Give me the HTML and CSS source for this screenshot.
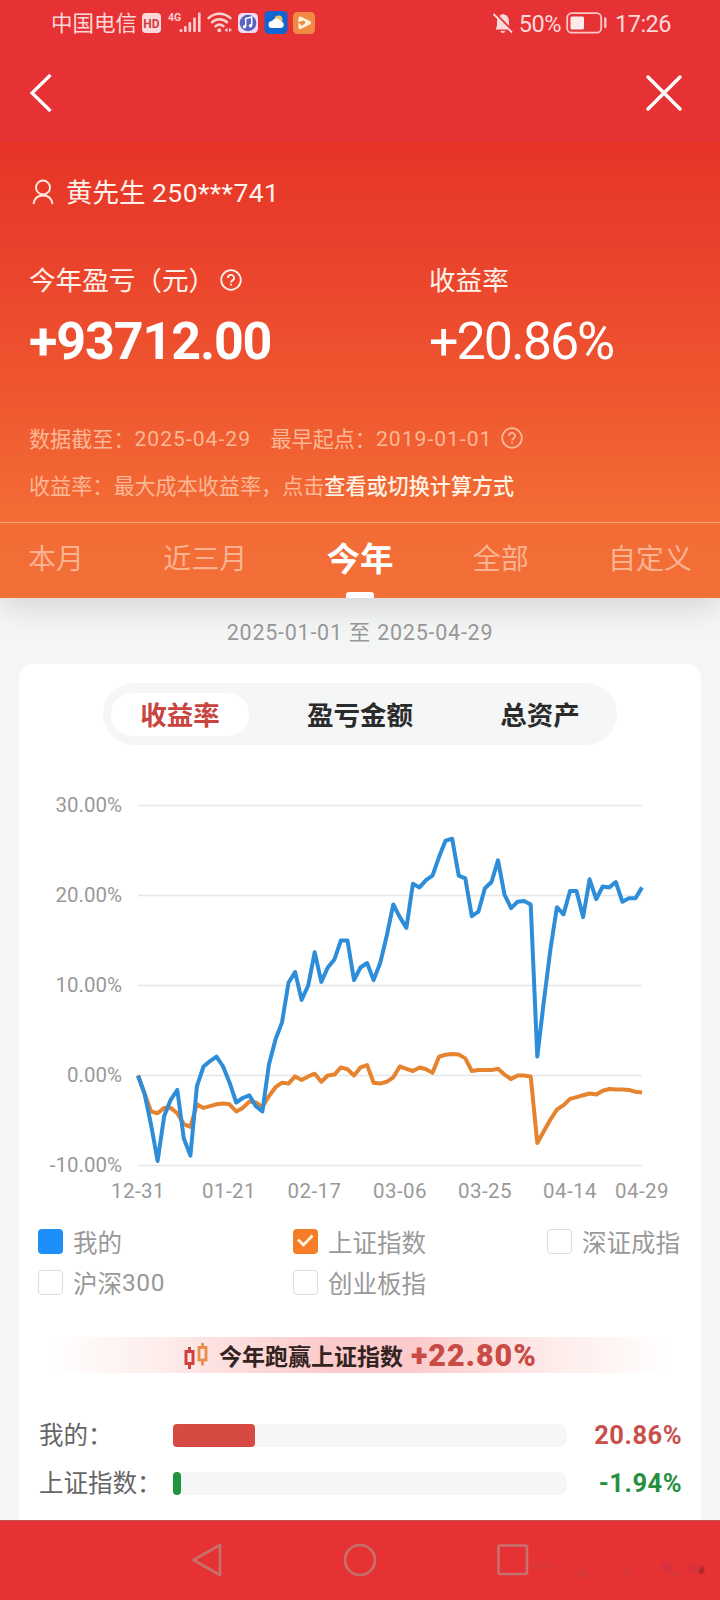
FILE: index.html
```html
<!DOCTYPE html>
<html lang="zh-CN">
<head>
  <meta charset="UTF-8" />
  <meta name="viewport" content="width=device-width, initial-scale=1" />
  <title>收益分析</title>
  <link rel="stylesheet" href="styles.css">
</head>
<body>
  <div class="statusbar">
    <span class="carrier">中国电信</span>
    <svg class="status-left" width="176" height="26" viewBox="0 0 176 26">
      <rect x="2" y="4" width="19" height="20" rx="4" fill="#fbd9da"/>
      <text x="11.5" y="18.500" class="hd">HD</text>
      <text x="28" y="11.500" class="net">4G</text>
      <g fill="#fbd0d1">
        <circle cx="41" cy="21.500" r="1.600"/>
        <rect x="44" y="17" width="2.600" height="6" rx="1"/>
        <rect x="48.500" y="13" width="2.600" height="10" rx="1"/>
        <rect x="53.200" y="8.500" width="2.600" height="14.500" rx="1"/>
        <rect x="58" y="3.500" width="2.600" height="19.500" rx="1"/>
      </g>
      <g fill="none" stroke="#fbd0d1" stroke-width="2.500" stroke-linecap="round">
        <path d="M68.500 9.200c6.500-6 15.500-6 22 0"/>
        <path d="M72 13.300c4.500-4 10.500-4 15 0"/>
        <path d="M75.500 17.200c2.500-2 5.500-2 8 0"/>
      </g>
      <circle cx="79.300" cy="21.300" r="2" fill="#fbd0d1"/>
      <path d="M84.500 21l3-2.300v4.600zM92 21l-3-2.300v4.600z" fill="#fbd0d1"/>
      <rect x="98" y="4" width="20" height="20" rx="4.500" fill="#f6dcf2"/>
      <circle cx="108" cy="14" r="8.300" fill="#5864c4"/>
      <path d="M105.700 17.500V9.500l6-1.500v8.500" fill="none" stroke="#fff" stroke-width="1.500"/>
      <circle cx="104.500" cy="17.700" r="1.700" fill="#fff"/>
      <circle cx="110.500" cy="16.700" r="1.700" fill="#fff"/>
      <rect x="124.500" y="2" width="23" height="23" rx="4.500" fill="#0f65d2"/>
      <circle cx="138.500" cy="10.500" r="4" fill="#e5c869"/>
      <path d="M132 19a3.500 3.500 0 0 1 0-7 5 5 0 0 1 9 .5 3.300 3.300 0 0 1 0 6.500z" fill="#fff"/>
      <rect x="153" y="3" width="22" height="22" rx="4.500" fill="#f18b43"/>
      <path d="M160 9l9.500 4.800-9.500 4.800z" fill="#fff2df" stroke="#fff2df" stroke-width="3.200" stroke-linejoin="round"/>
      <path d="M158 13l6-1.500 1.800 2.300-4 3z" fill="#f18b43"/>
    </svg>
    <div class="status-right">
      <svg width="22" height="22" viewBox="0 0 22 22">
        <path d="M3.500 17.500c1.500-2 1.500-4 1.500-7.500C5 5.500 7.500 3 10 2.500a1.300 1.300 0 0 1 2.200 0C15 3.200 17 5.500 17 9.500c0 4 .3 6 1.700 8z" fill="#fbd9da"/>
        <path d="M8.300 19h5a2.600 2.600 0 0 1-5 0z" fill="#fbd9da"/>
        <path d="M3 1.500l18 18" stroke="#e73235" stroke-width="2.500"/>
        <path d="M1.500 2l18.500 18.500" stroke="#fbd9da" stroke-width="1.900"/>
      </svg>
      <span class="battery-text">50%</span>
      <svg width="42" height="22" viewBox="0 0 42 22">
        <rect x="1.200" y="1.200" width="34" height="19.500" rx="4.500" fill="none" stroke="#fbc7c8" stroke-width="1.800"/>
        <rect x="4.500" y="4.500" width="13.500" height="13" rx="1.500" fill="#fdeaea"/>
        <path d="M39.300 6.500v8.500" stroke="#fbc7c8" stroke-width="2.300" stroke-linecap="round"/>
      </svg>
      <span class="clock">17:26</span>
    </div>
  </div>

  <nav class="navbar">
    <svg width="24" height="40" viewBox="0 0 24 40"><path d="M21.500 2L3 20l18.500 18" fill="none" stroke="#fff" stroke-width="3.200"/></svg>
    <svg width="36" height="36" viewBox="0 0 36 36"><path d="M2 2l32 32M34 2L2 34" fill="none" stroke="#fff" stroke-width="3.400" stroke-linecap="round"/></svg>
  </nav>

  <header class="summary">
    <div class="user">
      <svg width="22" height="26" viewBox="0 0 22 26"><g fill="none" stroke="#ffeae0" stroke-width="1.900"><circle cx="11" cy="8.500" r="7"/><path d="M1.500 25c.8-5.500 4.500-8.500 9.500-8.500s8.700 3 9.500 8.500"/></g></svg>
      <span>黄先生 <span class="account">250***741</span></span>
    </div>

    <div class="totals">
      <div class="total">
        <div class="total-label"><span>今年盈亏（元）</span>
          <svg class="help" width="22" height="22" viewBox="0 0 22 22"><circle cx="11" cy="11" r="9.800"/><path d="M8 9a3 3 0 1 1 4.300 2.600c-.9.500-1.300.9-1.300 2"/><path d="M11 14.800v1.800"/></svg>
        </div>
        <div class="total-value profit">+93712.00</div>
      </div>
      <div class="total">
        <div class="total-label"><span>收益率</span></div>
        <div class="total-value rate">+20.86%</div>
      </div>
    </div>

    <p class="note">数据截至：<span class="date d1">2025-04-29</span>最早起点：<span class="date d2">2019-01-01</span>
      <svg class="help" width="22" height="22" viewBox="0 0 22 22"><circle cx="11" cy="11" r="9.800"/><path d="M8 9a3 3 0 1 1 4.300 2.600c-.9.500-1.300.9-1.300 2"/><path d="M11 14.800v1.800"/></svg>
    </p>
    <p class="note note-last">收益率：最大成本收益率，点击<b>查看或切换计算方式</b></p>

    <div class="tabs">
      <span>本月</span>
      <span>近三月</span>
      <span class="active">今年</span>
      <span>全部</span>
      <span>自定义</span>
    </div>
  </header>

  <main>
    <div class="range">2025-01-01 至 2025-04-29</div>

    <section class="card">
      <div class="segment">
        <span class="on">收益率</span>
        <span>盈亏金额</span>
        <span>总资产</span>
      </div>

      <svg id="chart" class="chart" width="682" height="450" viewBox="0 0 682 450"></svg>

      <div class="legend">
        <div><i class="box mine"></i>我的</div>
        <div><i class="box checked"><svg width="25" height="25" viewBox="0 0 25 25"><path d="M5 10.500l5.500 5.500 9-9.500" fill="none" stroke="#fff3e4" stroke-width="2.800"/></svg></i>上证指数</div>
        <div><i class="box"></i>深证成指</div>
        <div><i class="box"></i>沪深<span class="num">300</span></div>
        <div><i class="box"></i>创业板指</div>
      </div>

      <div class="banner">
        <svg width="26" height="28" viewBox="0 0 26 28">
          <g fill="none" stroke="#cf4140" stroke-width="3"><rect x="3" y="9.500" width="7" height="12"/><path d="M6.500 5v5M6.500 21v6"/></g>
          <g fill="none" stroke="#e88c4c" stroke-width="2.800"><rect x="16" y="5.500" width="7" height="12.500"/><path d="M19.500 1v5M19.500 18v5.500"/></g>
        </svg>
        <span>今年跑赢上证指数</span>
        <strong>+22.80%</strong>
      </div>

      <div class="compare">
        <span class="name">我的：</span>
        <div class="track"><div class="fill up" style="width:20.86%"></div></div>
        <span class="value red">20.86%</span>
      </div>
      <div class="compare">
        <span class="name">上证指数：</span>
        <div class="track"><div class="fill down" style="width:1.94%"></div></div>
        <span class="value green">-1.94%</span>
      </div>
    </section>
  </main>

  <footer class="sysnav">
    <svg width="340" height="34" viewBox="0 0 340 34" fill="none" stroke="#c5716e" stroke-width="2.600">
      <path d="M3.500 17L30 2v30z" stroke-linejoin="round"/>
      <circle cx="170" cy="17" r="15"/>
      <rect x="308.500" y="2.500" width="28.500" height="28.500" rx="2"/>
    </svg>
    <svg class="smudge" width="180" height="30" viewBox="0 0 180 30">
      <g fill="#a94a45" opacity=".35">
        <ellipse cx="14" cy="13" rx="13" ry="3"/>
        <ellipse cx="52" cy="21" rx="7" ry="4"/>
        <ellipse cx="97" cy="18" rx="5" ry="4"/>
        <ellipse cx="144" cy="21" rx="6" ry="4"/>
      </g>
      <ellipse cx="136" cy="14" rx="6" ry="4" fill="#b4305f" opacity=".5"/>
      <ellipse cx="164" cy="15" rx="5" ry="6" fill="#a93a55" opacity=".35"/>
      <path d="M169 20l4-8v8z" fill="#4a1518"/>
    </svg>
  </footer>

  <script src="chart.js"></script>
</body>
</html>
```
FILE: styles.css
```css
* {
  box-sizing: border-box;
}
body {
  margin: 0;
  width: 720px;
  height: 1600px;
  overflow: hidden;
  display: flex;
  flex-direction: column;
  background: #f4f6f6;
  font-family: Roboto, "Noto Sans CJK SC", sans-serif;
}
svg {
  display: block;
  flex: none;
}

/* status bar */
.statusbar {
  height: 46px;
  padding: 0 49px 0 51px;
  display: flex;
  align-items: center;
  background: #e73235;
  color: #fbd9da;
}
.carrier {
  font-size: 21.5px;
  width: 89px;
  padding-bottom: 3px;
  white-space: nowrap;
}
.status-left {
  margin-top: -3px;
}
.hd {
  font: bold 12px Roboto, sans-serif;
  text-anchor: middle;
  fill: #d43a40;
}
.net {
  font: bold 10.5px Roboto, sans-serif;
  fill: #fbd0d1;
}
.status-right {
  margin-left: auto;
  display: flex;
  align-items: center;
  font-size: 23.5px;
}
.battery-text {
  margin: 2px 5px 0 5px;
  letter-spacing: -0.5px;
}
.clock {
  margin: 2px 0 0 7px;
  letter-spacing: -0.5px;
}

/* top bar */
.navbar {
  height: 96px;
  padding: 0 38px 2px 29px;
  display: flex;
  align-items: center;
  justify-content: space-between;
  background: #e73235;
  position: relative;
  z-index: 1;
}

/* red summary block */
.summary {
  height: 456px;
  display: flex;
  flex-direction: column;
  background: linear-gradient(#e63225 0, #e73527 14px, #e93f2b 90px, #ef5830 260px, #f36b35 370px, #f37038 456px);
  color: #fff3ec;
  box-shadow: 0 8px 30px rgba(0,0,0,0.14);
  position: relative;
}
.user {
  height: 40px;
  margin: 30px 0 0 32px;
  display: flex;
  align-items: center;
  gap: 12px;
  font-size: 26.5px;
}
.user > span {
  margin-top: -4px;
}
.account {
  letter-spacing: 0.4px;
}
.totals {
  display: grid;
  grid-template-columns: 400px 1fr;
  padding-left: 29px;
  margin-top: 48px;
}
.total-label {
  display: flex;
  align-items: center;
  height: 40px;
  font-size: 26.6px;
}
.total-label span {
  margin-top: -4px;
}
.total-label .help {
  margin-left: 5px;
}
.help {
  fill: none;
  stroke: currentColor;
  stroke-width: 1.8;
}
.total-value {
  height: 60px;
  line-height: 60px;
  margin-top: 12px;
  font-size: 52px;
  color: #fff;
}
.profit {
  font-weight: bold;
  letter-spacing: -1.1px;
}
.rate {
  letter-spacing: -2px;
}
.note {
  display: flex;
  align-items: center;
  height: 40px;
  margin: 46px 0 0 29px;
  font-size: 21.1px;
  color: #fbb896;
}
.note b {
  font-weight: 500;
  color: #fff3e6;
}
.note-last {
  margin-top: 7px;
}
.date {
  width: 136px;
  letter-spacing: 1px;
}
.d2 {
  width: 125px;
}
.tabs {
  height: 76px;
  margin-top: auto;
  padding: 0 28px;
  border-top: 1px solid #f7a07a;
  display: flex;
  justify-content: space-between;
  align-items: center;
  font-size: 28px;
  color: #fab391;
}
.tabs span {
  height: 75px;
  line-height: 73px;
}
.tabs .active {
  font-size: 33.5px;
  font-weight: bold;
  color: #fff;
  position: relative;
}
.tabs .active::after {
  content: "";
  position: absolute;
  left: 50%;
  bottom: 0;
  width: 28px;
  height: 6px;
  margin-left: -14px;
  border-radius: 3px 3px 0 0;
  background: #fff;
}

/* content */
main {
  flex: 1;
  display: flex;
  flex-direction: column;
  padding: 0 19px;
}
.range {
  height: 66px;
  line-height: 70px;
  text-align: center;
  font-size: 21.5px;
  letter-spacing: 0.75px;
  color: #999;
}
.card {
  flex: 1;
  background: #fff;
  border-radius: 14px 14px 0 0;
}
.segment {
  width: 514px;
  height: 62px;
  margin: 19px auto 0 84px;
  padding: 0 8px;
  border-radius: 31px;
  display: flex;
  justify-content: space-between;
  align-items: center;
  background: #f5f7f7;
  font-size: 26.5px;
  font-weight: bold;
  color: #2b2b2b;
}
.segment span {
  width: 138px;
  height: 43px;
  line-height: 45px;
  border-radius: 22px;
  text-align: center;
}
.segment .on {
  background: #fff;
  color: #c9443f;
}
.chart {
  margin-top: 15px;
}
.chart .grid {
  stroke: #e6e6e6;
  stroke-width: 1.6;
}
.chart text {
  font-size: 20.5px;
  fill: #999;
}
.chart polyline {
  fill: none;
  stroke-width: 4;
  stroke-linejoin: round;
}
.legend {
  display: grid;
  grid-template-columns: 255px 254px 1fr;
  grid-auto-rows: 41px;
  padding-left: 19px;
  margin-top: 11px;
  font-size: 24.5px;
  color: #999;
}
.legend div {
  display: flex;
  align-items: center;
  white-space: nowrap;
}
.num {
  letter-spacing: 0.6px;
}
.box {
  width: 25px;
  height: 25px;
  margin-right: 10px;
  border: 1px solid #ddd;
  border-radius: 4px;
}
.mine {
  border: none;
  background: #1e8ffa;
}
.checked {
  border: none;
  background: #f57d26;
}
.banner {
  height: 36px;
  margin: 34px 19px 0;
  display: flex;
  align-items: center;
  padding-left: 145px;
  background: linear-gradient(90deg, #fff 2%, #fdecea 20%, #fccaca 45%, #fccaca 58%, #fdecea 80%, #fff 98%);
  font-size: 23px;
  font-weight: bold;
  color: #33231f;
}
.banner svg {
  margin-top: 2px;
}
.banner span {
  margin-left: 10px;
  white-space: nowrap;
}
.banner strong {
  margin-left: 8px;
  font-size: 30.5px;
  letter-spacing: 1px;
  color: #c94b45;
}
.compare {
  height: 48px;
  display: flex;
  align-items: center;
  padding: 0 19px 0 20px;
  font-size: 24.5px;
  color: #666;
}
.banner + .compare {
  margin-top: 38px;
}
.name {
  width: 134px;
  padding-bottom: 3px;
  white-space: nowrap;
}
.track {
  width: 394px;
  height: 23px;
  border-radius: 8px;
  background: #f5f7f7;
}
.fill {
  height: 23px;
  border-radius: 4px;
}
.up {
  background: #d64a43;
}
.down {
  background: #1f933e;
}
.value {
  margin-left: auto;
  font-size: 25.5px;
  font-weight: bold;
  letter-spacing: 0.5px;
}
.red {
  color: #c9504a;
}
.green {
  color: #25903f;
}

/* android keys */
.sysnav {
  height: 80px;
  padding-bottom: 1px;
  display: flex;
  justify-content: center;
  align-items: center;
  background: #e73235;
  border-top: 1px solid #c0504a;
  position: relative;
}
.smudge {
  position: absolute;
  right: 10px;
  bottom: 17px;
  filter: blur(1.5px);
  opacity: 0.7;
}
```
FILE: chart.js
```js
const mine = [
  0, -2, -5.5, -9.5, -4.5, -2.7, -1.6, -7, -8.9, -1.2, 1, 1.6, 2.1, 1, -0.8, -3, -2.5, -2.2, -3.4, -4,
  1.2, 4, 5.9, 10.3, 11.5, 8.4, 10, 13.7, 10.4, 12, 12.9, 15, 15, 10.6, 12, 12.5, 10.6, 12.5, 15.5, 19,
  17.6, 16.4, 21.3, 20.9, 21.7, 22.2, 24.3, 26.1, 26.3, 22.2, 21.9, 17.7, 18.2, 20.8, 21.5, 23.9, 20.1, 18.6, 19.3, 19.4,
  19, 2.1, 8.2, 14, 18.7, 17.9, 20.5, 20.5, 17.6, 21.8, 19.6, 21, 20.9, 21.5, 19.3, 19.7, 19.7, 20.9
];
const index = [
  0, -2, -4, -4.2, -3.6, -3.6, -4.2, -5.4, -5.7, -3.2, -3.6, -3.4, -3.2, -3.1, -3.2, -4, -3.6, -2.9, -3, -3.5,
  -2.3, -1.3, -0.8, -0.9, -0.1, -0.5, -0.1, 0.2, -0.7, 0, 0.1, 0.9, 0.7, 0, 0.9, 1.15, -0.8, -0.9, -0.7, -0.2,
  1, 0.75, 0.5, 0.9, 0.7, 0.3, 2.1, 2.3, 2.4, 2.35, 1.9, 0.5, 0.6, 0.6, 0.6, 0.75, 0.1, -0.4, 0, 0,
  -0.1, -7.5, -6.2, -4.9, -3.8, -3.3, -2.6, -2.4, -2.2, -2, -2.1, -1.7, -1.5, -1.55, -1.55, -1.6, -1.8, -1.9
];
const labels = [['12-31', 119], ['01-21', 210], ['02-17', 295.5], ['03-06', 381], ['03-25', 466], ['04-14', 551], ['04-29', 623]];

const left = 119;
const width = 504;
const zero = 315.5;
const y = v => zero - v * 9;

function line(data, color) {
  const points = data.map((v, i) => (left + i * width / (data.length - 1)).toFixed(1) + ',' + y(v).toFixed(1));
  return `<polyline points="${points.join(' ')}" stroke="${color}"/>`;
}

let html = '';
for (let v = 30; v >= -10; v -= 10) {
  html += `<line class="grid" x1="${left}" x2="${left + width}" y1="${y(v)}" y2="${y(v)}"/>`;
  html += `<text x="103" y="${y(v) + 6}" text-anchor="end">${v.toFixed(2)}%</text>`;
}
html += line(index, '#e5832f') + line(mine, '#2e8dd8');
labels.forEach(([text, x]) => {
  html += `<text x="${x}" y="438" text-anchor="middle" letter-spacing=".4">${text}</text>`;
});
document.getElementById('chart').innerHTML = html;
```
